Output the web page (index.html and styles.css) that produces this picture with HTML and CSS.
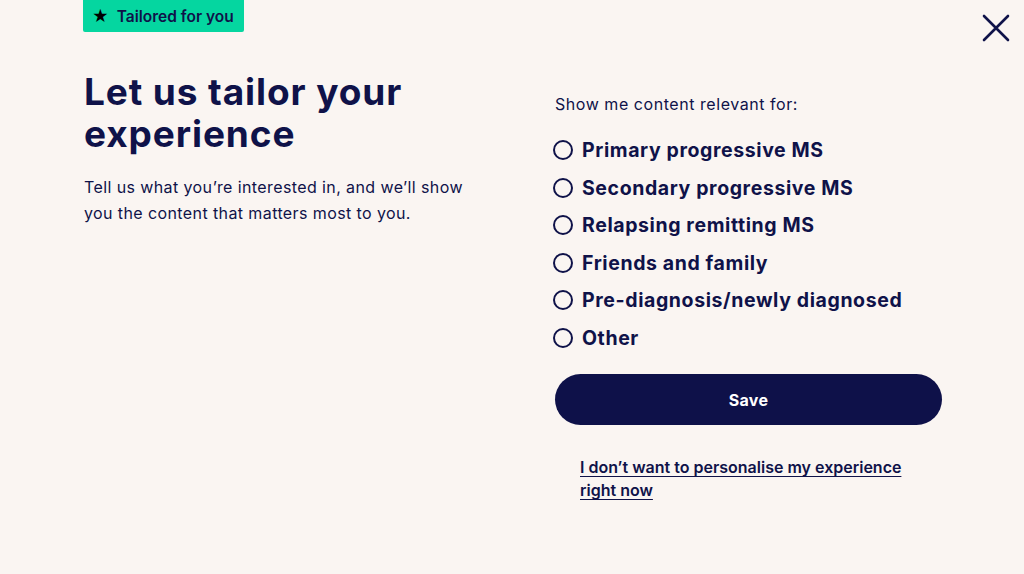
FILE: index.html
```html
<!DOCTYPE html>
<html lang="en">
<head>
<meta charset="utf-8">
<title>Tailored for you</title>
<link rel="stylesheet" href="styles.css">
</head>
<body>
<div class="modal">
  <button class="close" aria-label="Close">
    <svg viewBox="0 0 28 28" width="28" height="28"><path d="M2 2 L26 26 M26 2 L2 26" stroke="#0f1249" stroke-width="2.6" stroke-linecap="round" fill="none"/></svg>
  </button>
  <div class="intro">
    <div class="badge"><span class="star">★</span><span>Tailored for you</span></div>
    <h1 class="title">Let us tailor your experience</h1>
    <p class="lead">Tell us what you’re interested in, and we’ll show you the content that matters most to you.</p>
  </div>
  <form class="options">
    <p class="prompt">Show me content relevant for:</p>
    <ul class="choices">
      <li class="choice"><span class="radio"></span><span class="label">Primary progressive MS</span></li>
      <li class="choice"><span class="radio"></span><span class="label">Secondary progressive MS</span></li>
      <li class="choice"><span class="radio"></span><span class="label">Relapsing remitting MS</span></li>
      <li class="choice"><span class="radio"></span><span class="label">Friends and family</span></li>
      <li class="choice"><span class="radio"></span><span class="label">Pre-diagnosis/newly diagnosed</span></li>
      <li class="choice"><span class="radio"></span><span class="label">Other</span></li>
    </ul>
    <button type="button" class="save">Save</button>
    <a class="skip" href="#">I don’t want to personalise my experience right now</a>
  </form>
</div>
</body>
</html>
```

FILE: styles.css
```css
* { box-sizing: border-box; }
html, body { margin: 0; padding: 0; }
body {
  background: #faf5f2;
  color: #0f1249;
  font-family: "Inter", "Noto Sans", sans-serif;
  width: 1024px;
  height: 574px;
  overflow: hidden;
}
.modal {
  position: relative;
  display: grid;
  grid-template-columns: 471px 387px;
  padding-left: 84px;
  height: 574px;
}
.close {
  position: absolute;
  top: 14px;
  right: 14px;
  width: 28px;
  height: 28px;
  padding: 0;
  border: 0;
  background: none;
}
.close svg { display: block; }
.intro { display: flex; flex-direction: column; align-items: flex-start; }
.badge {
  display: flex;
  align-items: center;
  gap: 8px;
  height: 32px;
  margin-left: -1px;
  padding: 0 10px 0 9px;
  background: #05d6a0;
  border-radius: 0 0 2px 2px;
  font-size: 15.5px;
  font-weight: 600;
  color: #0f1249;
}
.star { color: #000; font-size: 16px; line-height: 1; }
.title {
  margin: 39px 0 0;
  font-size: 37px;
  line-height: 42px;
  font-weight: 700;
  letter-spacing: 0.9px;
}
.lead {
  margin: 19px 0 0;
  width: 392px;
  font-size: 16px;
  line-height: 26px;
  font-weight: 400;
  letter-spacing: 0.4px;
}
.options { display: flex; flex-direction: column; padding-top: 92px; }
.prompt {
  margin: 0;
  font-size: 16px;
  line-height: 24px;
  letter-spacing: 0.55px;
}
.choices {
  list-style: none;
  margin: 20px 0 0;
  padding: 0;
  display: flex;
  flex-direction: column;
  gap: 9.5px;
}
.choice {
  display: flex;
  align-items: center;
  gap: 9px;
  height: 28px;
  margin-left: -2px;
}
.radio {
  width: 20px;
  height: 20px;
  border: 2px solid #0f1249;
  border-radius: 50%;
  flex: none;
}
.label {
  font-size: 19.5px;
  font-weight: 700;
  letter-spacing: 0.6px;
}
.save {
  margin-top: 22.5px;
  height: 51px;
  width: 387px;
  border: 0;
  border-radius: 26px;
  background: #0e1149;
  color: #fff;
  font-family: inherit;
  font-size: 16px;
  font-weight: 700;
  letter-spacing: 0.3px;
}
.skip {
  margin: 31px 0 0 25px;
  width: 330px;
  color: #0f1249;
  font-size: 16px;
  line-height: 23px;
  font-weight: 600;
  text-decoration: underline;
  text-underline-offset: 3px;
}
```
